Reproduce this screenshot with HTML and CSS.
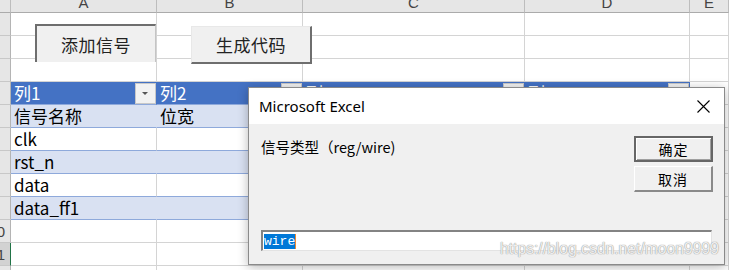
FILE: index.html
```html
<!DOCTYPE html>
<html lang="zh">
<head>
<meta charset="utf-8">
<title>Excel</title>
<link rel="stylesheet" href="styles.css">
</head>
<body>
<div class="sheet">
  <div class="row colhdr">
    <div class="rh"></div>
    <div class="c ca"><span>A</span></div>
    <div class="c cb"><span>B</span></div>
    <div class="c cc"><span>C</span></div>
    <div class="c cd"><span>D</span></div>
    <div class="c ce"><span>E</span></div>
  </div>
  <div class="row"><div class="rh"></div><div class="c ca"></div><div class="c cb"></div><div class="c cc"></div><div class="c cd"></div><div class="c ce"></div></div>
  <div class="row"><div class="rh"></div><div class="c ca"></div><div class="c cb"></div><div class="c cc"></div><div class="c cd"></div><div class="c ce"></div></div>
  <div class="row"><div class="rh"></div><div class="c ca"></div><div class="c cb"></div><div class="c cc"></div><div class="c cd"></div><div class="c ce"></div></div>
  <div class="row thead">
    <div class="rh"></div>
    <div class="c ca t"><span>列1</span><i class="dd"></i></div>
    <div class="c cb t"><span>列2</span><i class="dd"></i></div>
    <div class="c cc t"><span>列3</span><i class="dd"></i></div>
    <div class="c cd t"><span>列4</span><i class="dd"></i></div>
    <div class="c ce"></div>
  </div>
  <div class="row band">
    <div class="rh"></div>
    <div class="c ca t">信号名称</div>
    <div class="c cb t">位宽</div>
    <div class="c cc t"></div>
    <div class="c cd t"></div>
    <div class="c ce"></div>
  </div>
  <div class="row plain">
    <div class="rh"></div>
    <div class="c ca t">clk</div>
    <div class="c cb t"></div>
    <div class="c cc t"></div>
    <div class="c cd t"></div>
    <div class="c ce"></div>
  </div>
  <div class="row band">
    <div class="rh"></div>
    <div class="c ca t">rst_n</div>
    <div class="c cb t"></div>
    <div class="c cc t"></div>
    <div class="c cd t"></div>
    <div class="c ce"></div>
  </div>
  <div class="row plain">
    <div class="rh"></div>
    <div class="c ca t">data</div>
    <div class="c cb t"></div>
    <div class="c cc t"></div>
    <div class="c cd t"></div>
    <div class="c ce"></div>
  </div>
  <div class="row band">
    <div class="rh"></div>
    <div class="c ca t">data_ff1</div>
    <div class="c cb t"></div>
    <div class="c cc t"></div>
    <div class="c cd t"></div>
    <div class="c ce"></div>
  </div>
  <div class="row"><div class="rh"><span>10</span></div><div class="c ca"></div><div class="c cb"></div><div class="c cc"></div><div class="c cd"></div><div class="c ce"></div></div>
  <div class="row"><div class="rh sel"><span>11</span></div><div class="c ca"></div><div class="c cb"></div><div class="c cc"></div><div class="c cd"></div><div class="c ce"></div></div>
  <div class="row"><div class="rh"><span>12</span></div><div class="c ca"></div><div class="c cb"></div><div class="c cc"></div><div class="c cd"></div><div class="c ce"></div></div>

  <button class="fbtn fbtn-add">添加信号</button>
  <button class="fbtn fbtn-gen">生成代码</button>
</div>

<div class="dialog">
  <div class="dtitle">
    <span>Microsoft Excel</span>
    <svg class="close" width="13" height="13" viewBox="0 0 13 13"><path d="M0.5 0.5 L12.5 12.5 M12.5 0.5 L0.5 12.5" stroke="#000" stroke-width="1.1" fill="none"/></svg>
  </div>
  <div class="dbody">
    <div class="dtop">
      <div class="prompt">信号类型（reg/wire)</div>
      <div class="dbtns">
        <button class="dbtn ok">确定</button>
        <button class="dbtn">取消</button>
      </div>
    </div>
    <div class="dinput"><span class="selt">wire</span><i class="caret"></i></div>
  </div>
</div>

<div class="wm">https://blog.csdn.net/moon9999</div>
</body>
</html>
```
FILE: styles.css
```css
* { box-sizing: border-box; }
html, body { margin: 0; padding: 0; }
body {
  width: 729px;
  height: 270px;
  overflow: hidden;
  background: #fff;
  font-family: "Noto Sans CJK SC", "Noto Sans", sans-serif;
  position: relative;
}
.sheet { position: relative; }
.row { display: flex; height: 23px; }
.row > div { border-bottom: 1px solid #d4d4d4; }
.rh {
  width: 11px;
  flex: none;
  background: #e6e6e6;
  border-right: 1px solid #b4b4b4;
  border-bottom-color: #c8c8c8 !important;
  display: flex;
  justify-content: flex-end;
  align-items: center;
  padding-right: 5px;
  overflow: hidden;
  font-family: "Liberation Sans", sans-serif;
  font-size: 15px;
  color: #444;
  white-space: nowrap;
}
.rh.sel { background: #d2d2d2; border-right: 1px solid #217346; }
.c {
  flex: none;
  border-right: 1px solid #d4d4d4;
  overflow: hidden;
  white-space: nowrap;
}
.ca { width: 146px; }
.cb { width: 146px; }
.cc { width: 222px; }
.cd { width: 165px; }
.ce { flex: 1 1 auto; }

.colhdr { height: 13px; }
.colhdr > div {
  background: #e6e6e6;
  border-bottom: 1px solid #ababab;
  border-right-color: #bdbdbd;
}
.colhdr .c {
  display: flex;
  justify-content: center;
  align-items: flex-end;
  font-family: "Liberation Sans", sans-serif;
  font-size: 15px;
  line-height: 15px;
  color: #444;
}
.colhdr .c span { margin-bottom: 2px; }
.colhdr .rh { border-bottom-color: #ababab !important; }

.t {
  font-size: 17px;
  line-height: 22px;
  padding-left: 3px;
  color: #000;
}
.thead .t {
  background: #4472c4;
  border-right-color: #4472c4;
  border-bottom-color: #8ea9db;
  color: #fff;
  display: flex;
  justify-content: space-between;
  padding-right: 0;
}
.dd {
  width: 21px;
  height: 21px;
  margin-top: 1px;
  background: #f2f2f2;
  border: 1px solid #c8c8c8;
  position: relative;
  flex: none;
}
.dd::after {
  content: "";
  position: absolute;
  left: 6px;
  top: 8px;
  border-left: 3px solid transparent;
  border-right: 3px solid transparent;
  border-top: 3px solid #555;
}
.band .t {
  background: #d9e1f2;
  border-right-color: #d9e1f2;
  border-bottom-color: #8ea9db;
}
.band .cd.t { border-right-color: #d4d4d4; }
.plain .t { border-bottom-color: #8ea9db; }

.fbtn {
  position: absolute;
  width: 121px;
  height: 38px;
  padding: 0;
  background: #f0f0f0;
  font-family: "Noto Sans CJK SC", sans-serif;
  font-size: 17px;
  color: #222;
  letter-spacing: 0.5px;
}
.fbtn-add {
  left: 35px;
  top: 24px;
  border: none;
  border-top: 2px solid #6e6e6e;
  border-left: 2px solid #6e6e6e;
  border-right: 1px solid #c4c4c4;
}
.fbtn-gen {
  left: 191px;
  top: 26px;
  border: none;
  border-top: 1px solid #e8e8e8;
  border-left: 1px solid #e8e8e8;
  border-right: 2px solid #6e6e6e;
  border-bottom: 2px solid #6e6e6e;
}

.dialog {
  position: absolute;
  left: 248px;
  top: 87px;
  width: 477px;
  height: 178px;
  background: #f0f0f0;
  border: 1px solid #8a8a8a;
  box-shadow: 0 2px 10px rgba(0,0,0,0.28);
  display: flex;
  flex-direction: column;
}
.dtitle {
  height: 36px;
  background: #fff;
  display: flex;
  align-items: center;
  justify-content: space-between;
  padding: 0 14px 0 10px;
  font-family: "Noto Sans", sans-serif;
  font-size: 15px;
  color: #000;
}
.close { margin-top: 1px; }
.dbody {
  flex: 1;
  padding: 12px 11px 0 12px;
  display: flex;
  flex-direction: column;
}
.dtop { display: flex; justify-content: space-between; }
.prompt {
  font-size: 14.5px;
  line-height: 20px;
  padding-top: 1px;
  color: #000;
}
.dbtns { display: flex; flex-direction: column; gap: 4px; }
.dbtn {
  width: 79px;
  height: 26px;
  padding: 0;
  background: #f0f0f0;
  font-family: "Noto Sans CJK SC", sans-serif;
  font-size: 14px;
  color: #000;
  letter-spacing: 1px;
  border: none;
  border-top: 1px solid #fff;
  border-left: 1px solid #fff;
  border-right: 2px solid #8a8a8a;
  border-bottom: 2px solid #8a8a8a;
}
.dbtn.ok {
  border: 2px solid #666;
  box-shadow: inset 1px 1px 0 #fff, inset -1px -1px 0 #a0a0a0;
}
.dinput {
  margin-top: 38px;
  width: 451px;
  height: 21px;
  background: #fff;
  border-top: 2px solid #838383;
  border-left: 2px solid #838383;
  border-right: 1px solid #e3e3e3;
  border-bottom: 1px solid #e3e3e3;
  display: flex;
  align-items: center;
  padding-left: 1px;
}
.selt {
  background: #0078d7;
  color: #fff;
  font-family: "Liberation Mono", monospace;
  font-size: 13px;
  line-height: 15px;
  height: 15px;
}
.caret { width: 1px; height: 15px; background: #f08a30; }

.wm {
  position: absolute;
  left: 500px;
  top: 240px;
  font-family: "Liberation Sans", sans-serif;
  font-size: 15.7px;
  line-height: 18px;
  color: rgba(250,250,250,0.9);
  text-shadow: 0 0 1px #9a9a9a, 0 0 1px #9a9a9a;
  white-space: nowrap;
}
```
